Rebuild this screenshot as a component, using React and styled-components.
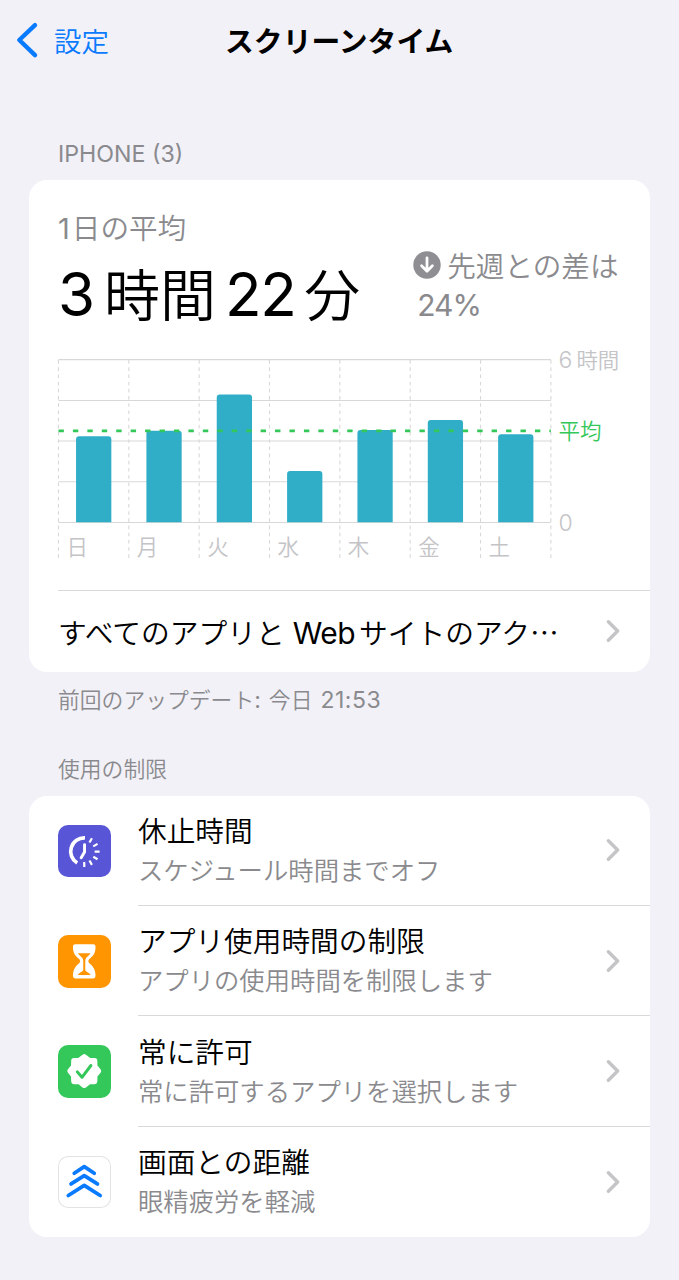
import styled, { createGlobalStyle } from 'styled-components';

const color = {
  background: '#f2f1f7',
  card: '#ffffff',
  label: '#000000',
  secondary: '#8a8a8e',
  tertiary: '#c4c4c7',
  separator: '#d9d9dc',
  grid: '#d8d8da',
  blue: '#0a7aff',
  green: '#34c759',
  bar: '#30aec7',
};

const cjk = `'Noto Sans CJK JP', sans-serif`;

const DAYS = [
  { name: '日', top: 436.2 },
  { name: '月', top: 430.7 },
  { name: '火', top: 394.5 },
  { name: '水', top: 471 },
  { name: '木', top: 430 },
  { name: '金', top: 420 },
  { name: '土', top: 434.2 },
];

const LIMITS = [
  { title: '休止時間', text: 'スケジュール時間までオフ', bg: '#5856d6', Icon: DowntimeIcon },
  { title: 'アプリ使用時間の制限', text: 'アプリの使用時間を制限します', bg: '#ff9500', Icon: HourglassIcon },
  { title: '常に許可', text: '常に許可するアプリを選択します', bg: '#34c759', Icon: AllowedIcon },
  { title: '画面との距離', text: '眼精疲労を軽減', bg: '#ffffff', outlined: true, Icon: DistanceIcon },
];

function DowntimeIcon() {
  const ticks = [30, 60, 90, 120, 150, 180];
  return (
    <svg width="52.5" height="52.5" viewBox="0 0 53 53" fill="none" stroke="#fff">
      <path d="M27.2 13A13.7 13.7 0 0 0 19.4 38.4" strokeWidth="3.7" />
      <path d="M26.8 20V27.2L23.4 33" strokeWidth="3" strokeLinecap="round" strokeLinejoin="round" />
      {ticks.map((deg) => (
        <path key={deg} d="M26.5 16.3V11.3" strokeWidth="2.2" transform={`rotate(${deg} 26.5 26.8)`} />
      ))}
    </svg>
  );
}

function HourglassIcon() {
  return (
    <svg width="52.5" height="52.5" viewBox="0 0 53 53" fill="none">
      <path
        d="M17.4 9.3H35.6Q37.9 9.3 37.9 11.6C37.9 18.5 35.6 21.3 31.4 24.4Q29.6 26.3 31.4 28.2C35.6 31.6 37.9 35 37.9 41.4Q37.9 43.8 35.6 43.8H17.4Q15.1 43.8 15.1 41.4C15.1 35 17.4 31.6 21.6 28.2Q23.4 26.3 21.6 24.4C17.4 21.3 15.1 18.5 15.1 11.6Q15.1 9.3 17.4 9.3Z"
        fill="#fff"
      />
      <path
        d="M20.1 18.4H32.9C31.7 20.3 29.8 21.5 28.6 22.9Q27.5 24 27.5 26.4V35.3C28.1 37.3 31.4 37.8 33.2 40.4H19.8C21.6 37.8 24.9 37.3 25.5 35.3V26.4Q25.5 24 24.4 22.9C23.2 21.5 21.3 20.3 20.1 18.4Z"
        fill="#ff9500"
      />
    </svg>
  );
}

function AllowedIcon() {
  return (
    <svg width="52.5" height="52.5" viewBox="0 0 53 53" fill="none">
      <path
        d="M26.5 12L31.2 15.7L36.9 15.9L37.1 21.8L40.8 26.3L37.1 30.8L36.9 36.7L31.2 36.9L26.5 40.6L21.8 36.9L16.1 36.7L15.9 30.8L12.2 26.3L15.9 21.8L16.1 15.9L21.8 15.7Z"
        fill="#fff"
        stroke="#fff"
        strokeWidth="5.6"
        strokeLinejoin="round"
      />
      <path
        d="M19.5 27.1L24.2 32.6L33.2 20.7"
        stroke="#34c759"
        strokeWidth="3"
        strokeLinecap="round"
        strokeLinejoin="round"
      />
    </svg>
  );
}

function DistanceIcon() {
  return (
    <svg
      width="52.5"
      height="52.5"
      viewBox="0 0 53 53"
      fill="none"
      stroke="#0a7aff"
      strokeWidth="3.8"
      strokeLinecap="round"
      strokeLinejoin="round"
    >
      <path d="M16.4 17.4L26.5 10.8L36.6 17.4" />
      <path d="M13.2 28.2L26.5 19.9L39.8 28.2" />
      <path d="M10.4 39.9L26.5 29.6L42.6 39.9" />
    </svg>
  );
}

function Chevron() {
  return (
    <svg width="15" height="24" viewBox="0 0 15 24" fill="none">
      <path
        d="M2.4 2.8L11.6 12L2.4 21.2"
        stroke="#c5c5c8"
        strokeWidth="3.4"
        strokeLinecap="round"
        strokeLinejoin="round"
      />
    </svg>
  );
}

/** 1週間の使用時間グラフ */
function UsageChart() {
  const left = 58.5;
  const step = 70.4;
  const right = left + step * 7;
  return (
    <SChart viewBox="29 340 621 250">
      {[359.5, 400.5, 441, 481.7, 522.5].map((y) => (
        <line key={y} x1={left} x2={right} y1={y} y2={y} stroke={color.grid} strokeWidth="1.1" />
      ))}
      {[0, 1, 2, 3, 4, 5, 6, 7].map((i) => (
        <line
          key={i}
          x1={left + step * i}
          x2={left + step * i}
          y1="360"
          y2="559"
          stroke={color.grid}
          strokeWidth="1.1"
          strokeDasharray="3.6 3.6"
        />
      ))}
      {DAYS.map(({ name, top }, i) => {
        const x = left + step * i + 17.6;
        return (
          <g key={name}>
            <path
              d={`M${x} 522.3V${top + 3}q0 -3 3 -3h29.3q3 0 3 3V522.3z`}
              fill={color.bar}
            />
            <SChartText x={left + step * i + 8} y="555.3">
              {name}
            </SChartText>
          </g>
        );
      })}
      <line
        x1={left}
        x2={right}
        y1="430.9"
        y2="430.9"
        stroke={color.green}
        strokeWidth="2.8"
        strokeDasharray="5.4 9.05"
      />
      <SChartText x="559" y="367.8">
        <tspan fontSize="23">6</tspan>
        <tspan dx="4">時間</tspan>
      </SChartText>
      <SChartText x="559" y="438.8" $fill={color.green}>
        平均
      </SChartText>
      <SChartText x="559" y="531" fontSize="23">
        0
      </SChartText>
    </SChart>
  );
}

function LimitRow({ title, text, bg, outlined, Icon }) {
  return (
    <SLimitRow>
      <SIconBox $bg={bg} $outlined={outlined}>
        <Icon />
      </SIconBox>
      <SLimitBody>
        <SLimitText>
          <STitle>{title}</STitle>
          <SSubtitle>{text}</SSubtitle>
        </SLimitText>
        <Chevron />
      </SLimitBody>
    </SLimitRow>
  );
}

function App() {
  return (
    <SPage>
      <GlobalStyle />
      <SNavBar>
        <SBack>
          <svg width="24" height="38" viewBox="0 0 24 38" fill="none">
            <path
              d="M20 4.2L4.3 19L20 34.2"
              stroke={color.blue}
              strokeWidth="4.4"
              strokeLinecap="round"
              strokeLinejoin="round"
            />
          </svg>
          設定
        </SBack>
        <SNavTitle>スクリーンタイム</SNavTitle>
      </SNavBar>

      <SDeviceLabel>IPHONE (3)</SDeviceLabel>
      <SCard>
        <SSummary>
          <div>
            <SAverageLabel>
              <SLatin $size="29px" $right="2px">1</SLatin>日の平均
            </SAverageLabel>
            <SAverage>
              <SLatin $size="60px">3</SLatin>
              <SUnit>時間</SUnit>
              <SLatin $size="60px" $tracking="-1.5px">22</SLatin>
              <SUnit>分</SUnit>
            </SAverage>
          </div>
          <SCompare>
            <SCompareLine>
              <svg width="28" height="28" viewBox="0 0 28 28" fill="none">
                <circle cx="14" cy="14" r="13.7" fill="#8e8e93" />
                <path
                  d="M14 7V19.7M8.6 14.8L14 20.2L19.4 14.8"
                  stroke="#fff"
                  strokeWidth="2.8"
                  strokeLinecap="round"
                  strokeLinejoin="round"
                />
              </svg>
              先週との差は
            </SCompareLine>
            <SPercent>24%</SPercent>
          </SCompare>
        </SSummary>
        <UsageChart />
        <SLinkRow>
          <SLinkText>
            すべてのアプリと
            <SLatin $size="30px" $left="8px" $right="4px" $tracking="-0.6px">Web</SLatin>
            サイトのアク…
          </SLinkText>
          <Chevron />
        </SLinkRow>
      </SCard>
      <SNote>
        前回のアップデート<SLatin $size="23px" $right="8px">:</SLatin>今日
        <SLatin $size="23px" $left="8px" $tracking="0.5px">21:53</SLatin>
      </SNote>

      <SSectionLabel>使用の制限</SSectionLabel>
      <SCard>
        {LIMITS.map((item) => (
          <LimitRow key={item.title} {...item} />
        ))}
      </SCard>
    </SPage>
  );
}

const GlobalStyle = createGlobalStyle`
  body {
    margin: 0;
    background: ${color.background};
  }

  * {
    box-sizing: border-box;
  }

  svg {
    display: block;
    flex-shrink: 0;
  }
`;

const SPage = styled.div`
  width: 679px;
  height: 1280px;
  padding: 0 29.5px 0 29px;
  overflow: hidden;
  background: ${color.background};
  color: ${color.label};
  font-family: ${cjk};
  font-weight: 350;
  white-space: nowrap;
`;

/** 欧文・数字 */
const SLatin = styled.span`
  margin-left: ${({ $left = 0 }) => $left};
  margin-right: ${({ $right = 0 }) => $right};
  font-family: Inter, sans-serif;
  font-size: ${({ $size }) => $size};
  font-weight: 400;
  letter-spacing: ${({ $tracking = 'normal' }) => $tracking};
`;

const SNavBar = styled.header`
  display: grid;
  grid-template-columns: 1fr auto 1fr;
  align-items: center;
  height: 80px;
  margin: 0 -14px;
`;

const SBack = styled.div`
  display: flex;
  align-items: center;
  gap: 15px;
  font-size: 27.5px;
  line-height: 38px;
  color: ${color.blue};
`;

const SNavTitle = styled.h1`
  margin: 0;
  font-size: 28.8px;
  line-height: 40px;
  font-weight: 700;
`;

const SDeviceLabel = styled.div`
  height: 100px;
  padding: 58px 29px 0;
  font-family: Inter, sans-serif;
  font-size: 23.2px;
  font-weight: 400;
  line-height: 32px;
  color: ${color.secondary};
`;

const SCard = styled.section`
  overflow: hidden;
  border-radius: 18px;
  background: ${color.card};
`;

const SSummary = styled.div`
  display: flex;
  justify-content: space-between;
  height: 160px;
  padding: 28px 31px 0 29px;
`;

const SAverageLabel = styled.div`
  font-size: 28.6px;
  line-height: 38px;
  color: ${color.secondary};
`;

const SAverage = styled.div`
  display: flex;
  align-items: baseline;
  font-size: 60px;
  line-height: 72px;
  margin-top: 8px;
`;

const SUnit = styled.span`
  margin: 0 9px;
  font-size: 56px;
`;

const SCompare = styled.div`
  padding-top: 38px;
  font-size: 28.6px;
  line-height: 38px;
  color: ${color.secondary};
`;

const SCompareLine = styled.div`
  display: flex;
  align-items: center;
  gap: 6px;
`;

const SPercent = styled.div`
  padding-left: 4px;
  font-family: Inter, sans-serif;
  font-size: 30px;
  font-weight: 400;
  line-height: 43px;
  letter-spacing: -1px;
`;

const SChart = styled.svg`
  width: 100%;
  height: 250px;
`;

const SChartText = styled.text`
  font-family: Inter, ${cjk};
  font-size: ${({ fontSize = 21.5 }) => fontSize}px;
  fill: ${({ $fill = color.tertiary }) => $fill};
`;

const SLinkRow = styled.div`
  display: flex;
  align-items: center;
  justify-content: space-between;
  height: 81.6px;
  margin-left: 29px;
  padding-right: 29px;
  border-top: 1px solid ${color.separator};
`;

const SLinkText = styled.div`
  padding-top: 2px;
  font-size: 28.75px;
  line-height: 40px;
`;

const SNote = styled.div`
  height: 82px;
  padding: 12px 29px 0;
  font-size: 21.8px;
  line-height: 30px;
  color: ${color.secondary};
`;

const SSectionLabel = styled.div`
  height: 42px;
  padding: 0 29px;
  font-size: 21.8px;
  line-height: 28px;
  color: ${color.secondary};
`;

const SLimitRow = styled.div`
  display: flex;
  align-items: center;
  gap: 27.5px;
  height: 110.45px;
  padding-left: 29px;
`;

const SIconBox = styled.div`
  width: 52.5px;
  height: 52.5px;
  overflow: hidden;
  border-radius: 10px;
  background: ${({ $bg }) => $bg};
  box-shadow: ${({ $outlined }) => ($outlined ? 'inset 0 0 0 1px #e3e3e6' : 'none')};
`;

const SLimitBody = styled.div`
  display: flex;
  flex: 1;
  align-items: center;
  justify-content: space-between;
  height: 100%;
  padding-right: 29px;
  border-bottom: 1px solid ${color.separator};

  ${SLimitRow}:last-child & {
    border-bottom-color: transparent;
  }
`;

const SLimitText = styled.div`
  padding-bottom: 1.6px;
`;

const STitle = styled.div`
  font-size: 28.7px;
  line-height: 40px;
`;

const SSubtitle = styled.div`
  font-size: 25.35px;
  line-height: 39px;
  color: ${color.secondary};
`;

export default App;
